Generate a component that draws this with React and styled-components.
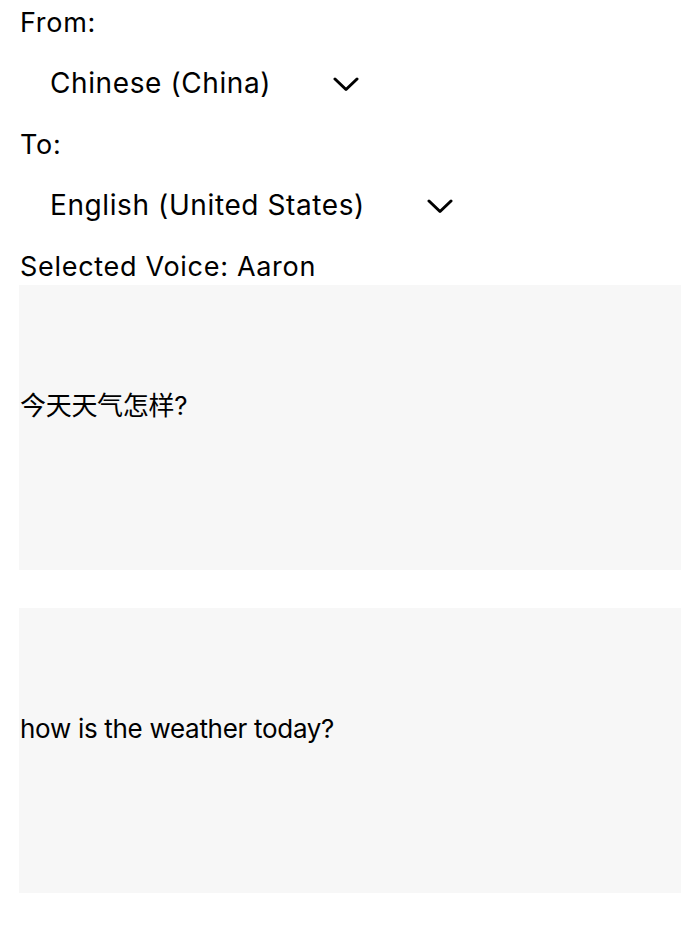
import React from "react";
import styled, { createGlobalStyle } from "styled-components";

const Global = createGlobalStyle`
  html, body { margin: 0; padding: 0; background: #fff; }
  body { font-family: Inter, "Noto Sans CJK SC", sans-serif; color: #000; }
`;

const Page = styled.div`
  display: flex;
  flex-direction: column;
  padding: 4px 19px 0 19px;
`;

const Rows = styled.div`
  display: flex;
  flex-direction: column;
  gap: 24px;
`;

const Label = styled.div`
  font-size: 27px;
  letter-spacing: 0.7px;
  line-height: 37px;
  padding-left: 1px;
  white-space: nowrap;
`;

const Picker = styled.div`
  display: flex;
  align-items: center;
  gap: 62px;
  padding-left: 31px;
  font-size: 28px;
  letter-spacing: 0.6px;
  line-height: 37px;
  white-space: nowrap;
`;

const Chevron = styled.svg`
  width: 26px;
  height: 16px;
  flex: none;
`;

const TextBox = styled.div`
  height: 285px;
  box-sizing: border-box;
  background: #f7f7f7;
  padding: 100px 0 0 1px;
  font-size: 26px;
  letter-spacing: -0.3px;
  line-height: 42px;
  margin-top: ${(p) => p.$mt}px;
`;

function Down() {
  return (
    <Chevron viewBox="0 0 26 16">
      <polyline
        points="2,3 13,13.5 24,3"
        fill="none"
        stroke="#000"
        strokeWidth="3"
        strokeLinecap="round"
        strokeLinejoin="round"
      />
    </Chevron>
  );
}

export default function App() {
  return (
    <>
      <Global />
      <Page>
        <Rows>
          <Label>From:</Label>
          <Picker>
            <span>Chinese (China)</span>
            <Down />
          </Picker>
          <Label>To:</Label>
          <Picker>
            <span>English (United States)</span>
            <Down />
          </Picker>
          <Label>Selected Voice: Aaron</Label>
        </Rows>
        <TextBox $mt={0}>今天天气怎样?</TextBox>
        <TextBox $mt={38}>how is the weather today?</TextBox>
      </Page>
    </>
  );
}
